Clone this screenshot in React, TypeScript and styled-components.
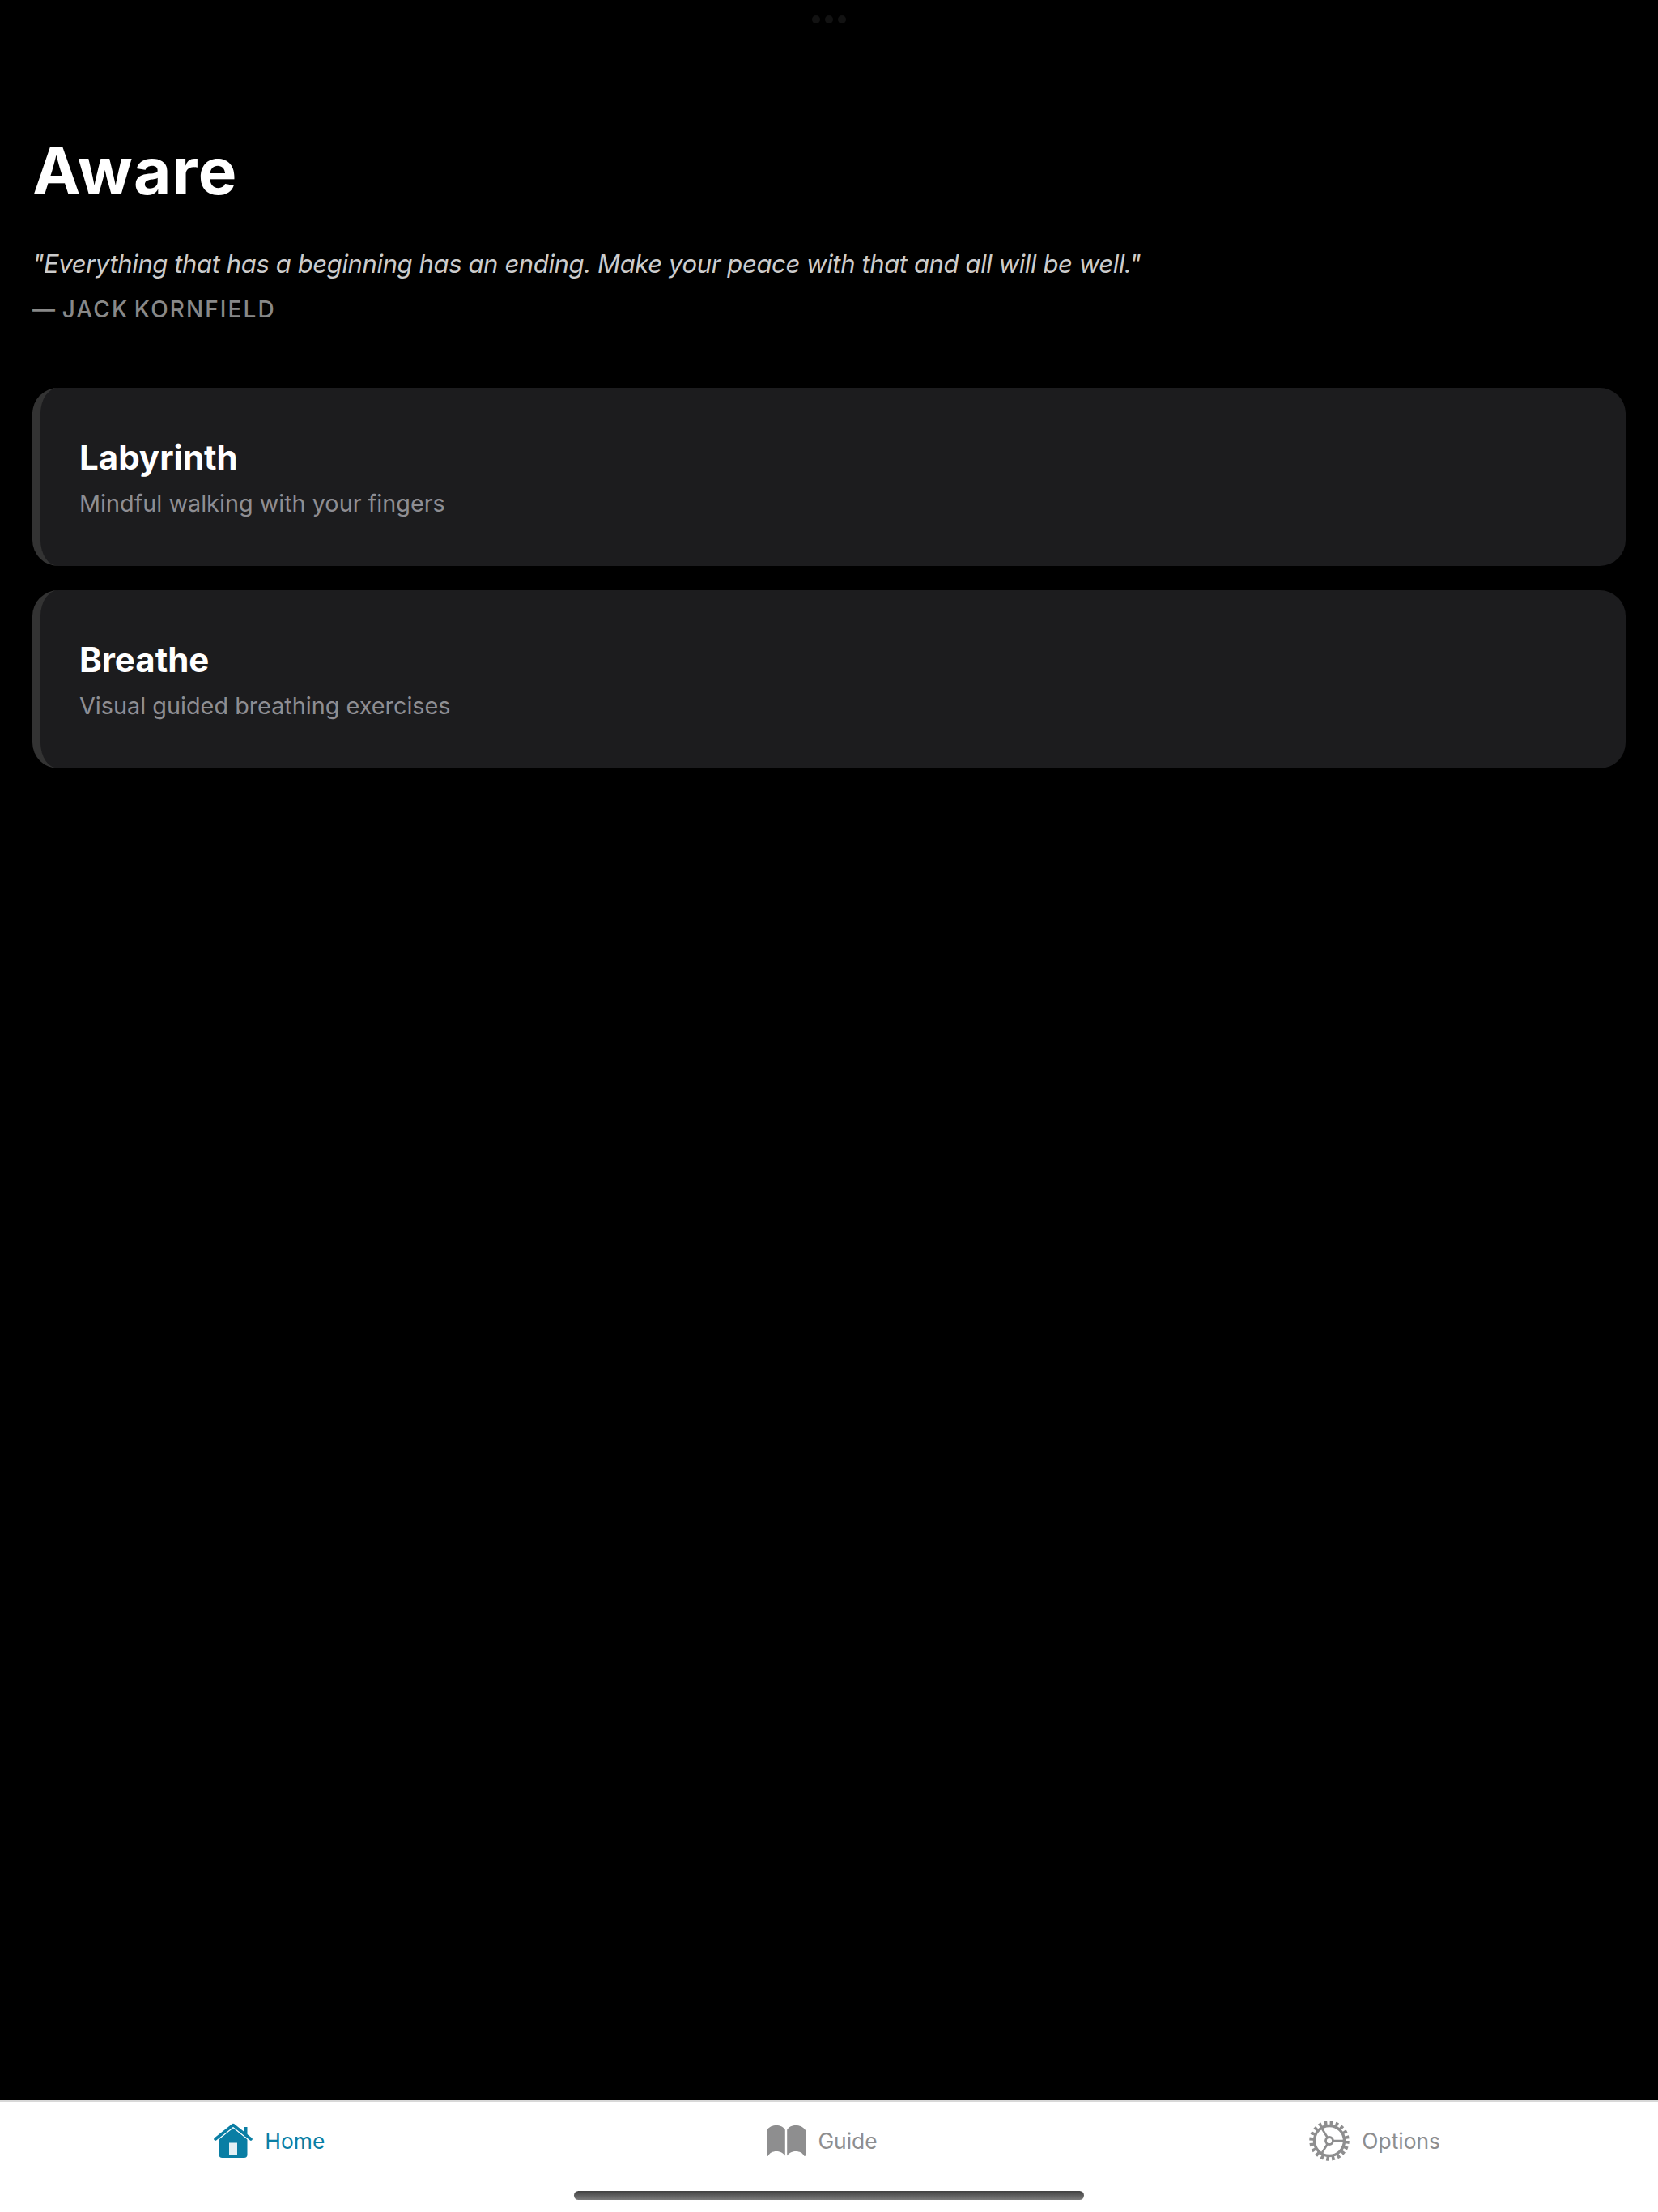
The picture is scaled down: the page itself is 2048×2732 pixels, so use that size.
import * as React from "react";
import styled, { createGlobalStyle } from "styled-components";

const GlobalStyle = createGlobalStyle`
  html, body {
    margin: 0;
    padding: 0;
    background: #000;
  }
  body {
    font-family: Inter, "Noto Sans", "Liberation Sans", sans-serif;
  }
`;

const Screen = styled.div`
  width: 2048px;
  height: 2732px;
  display: flex;
  flex-direction: column;
  background: #000;
  overflow: hidden;
`;

const Dots = styled.div`
  display: flex;
  justify-content: center;
  gap: 6px;
  padding-top: 19px;
`;

const Dot = styled.span`
  width: 10px;
  height: 10px;
  border-radius: 50%;
  background: #121212;
`;

const Content = styled.main`
  flex: 1;
  display: flex;
  flex-direction: column;
  padding: 132px 40px 0;
`;

const Title = styled.h1`
  margin: 0;
  font-size: 80px;
  line-height: 100px;
  font-weight: 700;
  letter-spacing: 1.4px;
  color: #fff;
`;

const Quote = styled.p`
  margin: 41px 0 0;
  font-size: 31px;
  line-height: 48px;
  font-style: italic;
  font-weight: 400;
  letter-spacing: -0.38px;
  color: #ccc;
`;

const Author = styled.p`
  margin: 12px 0 0;
  font-size: 28px;
  line-height: 40px;
  font-weight: 500;
  letter-spacing: 2.1px;
  word-spacing: -3px;
  color: #888;
  text-transform: uppercase;
`;

const CardList = styled.div`
  display: flex;
  flex-direction: column;
  gap: 30px;
  margin-top: 77px;
`;

const Card = styled.section`
  height: 220px;
  box-sizing: border-box;
  display: flex;
  flex-direction: column;
  justify-content: center;
  padding: 2px 48px 0;
  background: #1c1c1e;
  border-left: 10px solid #333;
  border-radius: 32px;
`;

const CardTitle = styled.h2`
  margin: 0;
  font-size: 42px;
  line-height: 56px;
  font-weight: 700;
  color: #fff;
`;

const CardText = styled.p`
  margin: 8px 0 0;
  font-size: 28.8px;
  line-height: 42px;
  color: #8e8e93;
`;

const TabBar = styled.nav`
  height: 138px;
  box-sizing: border-box;
  display: flex;
  flex-direction: column;
  background: #fff;
  border-top: 2px solid #d8d8d8;
`;

const TabRow = styled.div`
  display: grid;
  grid-template-columns: repeat(3, 1fr);
  height: 96px;
`;

const Tab = styled.div<{ $active?: boolean }>`
  display: flex;
  align-items: center;
  justify-content: center;
  gap: 15px;
  padding-right: 17px;
  color: ${(p) => (p.$active ? "#0a7ea4" : "#8e8e8f")};
`;

const TabLabel = styled.span`
  font-size: 26.4px;
  line-height: 32px;
  font-weight: 400;
`;

const HomeIndicator = styled.div`
  width: 630px;
  height: 11px;
  margin: 14px auto 0;
  border-radius: 6px;
  background: linear-gradient(180deg, #404040 0%, #7a7a7a 100%);
`;

const HomeIcon = () => (
  <svg width="48" height="44" viewBox="0 0 48 44" fill="none">
    <path
      d="M6.5 18.5 24 4.5 41.5 18.5V39a4 4 0 0 1-4 4h-27a4 4 0 0 1-4-4Z"
      fill="currentColor"
    />
    <path d="M19 24.5h10V40H19Z" fill="#e3f0f5" />
    <path
      d="M2 19.5 24 2l22 17.5"
      stroke="#fff"
      strokeWidth="7"
      strokeLinecap="round"
      strokeLinejoin="round"
    />
    <path
      d="M2 20 24 2.5 46 20"
      stroke="currentColor"
      strokeWidth="3.6"
      strokeLinecap="round"
      strokeLinejoin="round"
    />
    <path d="M37 5h4.5v11.5H37Z" fill="currentColor" />
  </svg>
);

const BookIcon = () => (
  <svg width="48" height="38" viewBox="0 0 48 38" fill="currentColor">
    <path d="M0 6C3 1.6 7.5 0 12 0c4.500 0 8.500 1.600 10.800 5.600V37.500C20 33.500 16 32 11.800 32 7.500 32 3.500 34 1.500 38L0 37.500Z" />
    <path d="M48 6C45 1.600 40.500 0 36 0c-4.500 0-8.500 1.600-10.800 5.600V37.500C28 33.500 32 32 36.200 32c4.300 0 8.300 2 10.300 6l1.500-.5Z" />
  </svg>
);

const GearIcon = () => (
  <svg width="50" height="50" viewBox="0 0 50 50" fill="none" stroke="currentColor">
    <circle cx="25" cy="25" r="22" strokeWidth="5.500" strokeDasharray="3.600 3.310" />
    <circle cx="25" cy="25" r="18.500" strokeWidth="3.400" />
    <circle cx="25" cy="25" r="4.500" strokeWidth="2.800" />
    <path d="M29.500 25H43M22.700 21 15 8.500M22.700 29 15 41.500" strokeWidth="2.600" />
  </svg>
);

const actions = [
  { title: "Labyrinth", text: "Mindful walking with your fingers" },
  { title: "Breathe", text: "Visual guided breathing exercises" },
];

export default function App() {
  return (
    <Screen>
      <GlobalStyle />
      <Dots>
        <Dot />
        <Dot />
        <Dot />
      </Dots>
      <Content>
        <Title>Aware</Title>
        <Quote>
          "Everything that has a beginning has an ending. Make your peace with that and all will be well."
        </Quote>
        <Author>— Jack Kornfield</Author>
        <CardList>
          {actions.map((a) => (
            <Card key={a.title}>
              <CardTitle>{a.title}</CardTitle>
              <CardText>{a.text}</CardText>
            </Card>
          ))}
        </CardList>
      </Content>
      <TabBar>
        <TabRow>
          <Tab $active>
            <HomeIcon />
            <TabLabel>Home</TabLabel>
          </Tab>
          <Tab>
            <BookIcon />
            <TabLabel>Guide</TabLabel>
          </Tab>
          <Tab>
            <GearIcon />
            <TabLabel>Options</TabLabel>
          </Tab>
        </TabRow>
        <HomeIndicator />
      </TabBar>
    </Screen>
  );
}
